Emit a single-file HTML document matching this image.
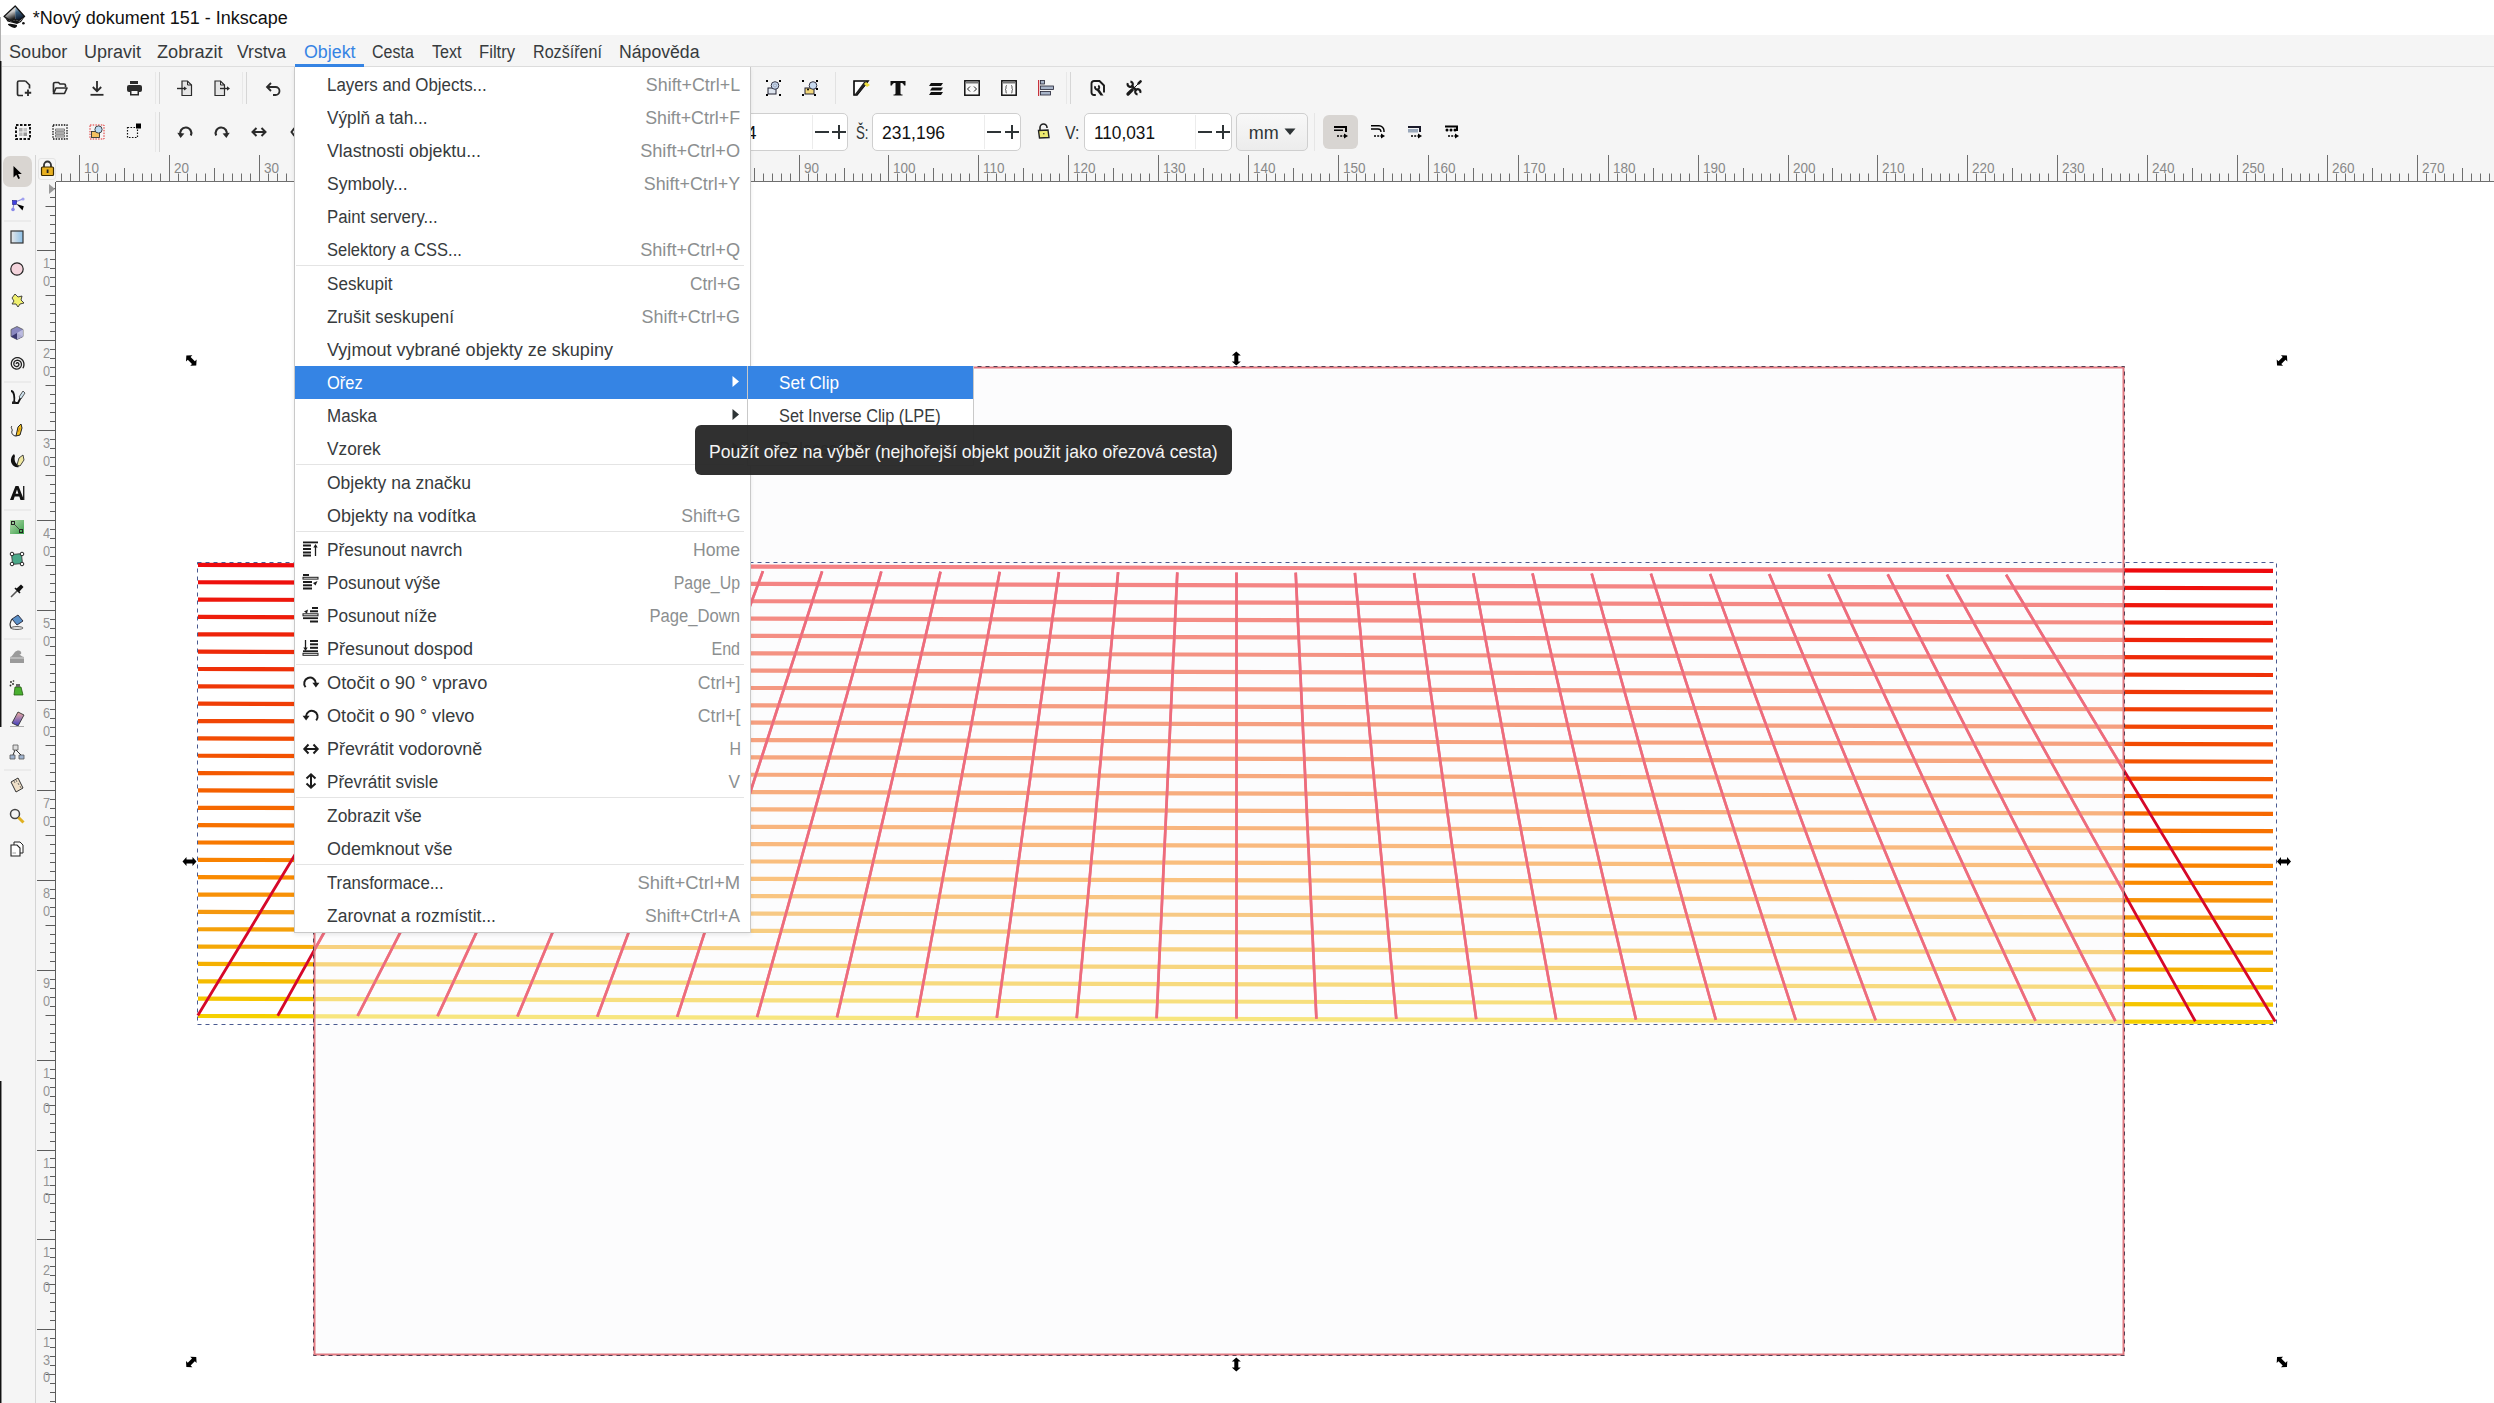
<!DOCTYPE html>
<html><head><meta charset="utf-8"><title>Inkscape</title>
<style>
html,body{margin:0;padding:0;}
body{width:2494px;height:1403px;position:relative;overflow:hidden;background:#fff;font-family:"Liberation Sans", sans-serif;}
.a{position:absolute;}
.t{position:absolute;white-space:pre;line-height:normal;}
svg{position:absolute;overflow:visible;}
</style></head><body>
<div class="a" style="left:0px;top:0px;width:2494px;height:35px;background:#ffffff;"></div>
<svg style="left:0px;top:0px;" width="32" height="34">
<defs><linearGradient id="lgl" x1="0" y1="0" x2="0.3" y2="1"><stop offset="0" stop-color="#ffffff"/><stop offset="0.55" stop-color="#c8c8c8"/><stop offset="1" stop-color="#222"/></linearGradient>
<linearGradient id="lgr" x1="0" y1="0" x2="0.2" y2="1"><stop offset="0" stop-color="#d8ecf8"/><stop offset="0.45" stop-color="#3a6080"/><stop offset="1" stop-color="#0a1428"/></linearGradient></defs>
<path d="M15.2 6 L15.2 19.5 L11 21 L4 16.5 Z" fill="url(#lgl)"/>
<path d="M15.2 6 L24.6 16.5 L19 20.5 L15.2 19.5 Z" fill="url(#lgr)"/>
<path d="M15.2 6 L24.6 16.5 L19 20.5 L15.2 19.5 L11 21 L4 16.5 Z" fill="none" stroke="#111" stroke-width="1.2" stroke-linejoin="round"/>
<path d="M4.5 16.8 L10.5 21.5 L15.5 20 L19.5 21.5 L24.2 17.5 L21 22 L17 24 L12.5 22.8 L7.5 21.5 Z" fill="#141414"/>
<path d="M8 24 C11 23.2 14 24 17 25 C17.5 27 15.5 28.2 13.5 27.8 C11.5 27.3 9.5 26.2 8 24.8 Z" fill="#141414"/>
<circle cx="23.4" cy="23.2" r="1.3" fill="#141414"/>
</svg>
<div class="t" style="left:32.70px;top:7.71px;font-size:18px;color:#111;">*Nový dokument 151 - Inkscape</div>
<div class="a" style="left:0px;top:35px;width:2494px;height:31px;background:#f5f5f5;"></div>
<div class="a" style="left:0px;top:66px;width:2494px;height:1px;background:#dedede;"></div>
<div class="t" style="left:9.40px;top:42.31px;font-size:18px;color:#373b3d;transform:scaleX(1.0058);transform-origin:0 0;">Soubor</div>
<div class="t" style="left:84.40px;top:42.31px;font-size:18px;color:#373b3d;transform:scaleX(1.0012);transform-origin:0 0;">Upravit</div>
<div class="t" style="left:156.60px;top:42.31px;font-size:18px;color:#373b3d;transform:scaleX(1.0100);transform-origin:0 0;">Zobrazit</div>
<div class="t" style="left:237.40px;top:42.31px;font-size:18px;color:#373b3d;transform:scaleX(0.9753);transform-origin:0 0;">Vrstva</div>
<div class="t" style="left:303.80px;top:42.31px;font-size:18px;color:#3584e4;transform:scaleX(0.9898);transform-origin:0 0;">Objekt</div>
<div class="t" style="left:372.40px;top:42.31px;font-size:18px;color:#373b3d;transform:scaleX(0.8888);transform-origin:0 0;">Cesta</div>
<div class="t" style="left:432.30px;top:42.31px;font-size:18px;color:#373b3d;transform:scaleX(0.8965);transform-origin:0 0;">Text</div>
<div class="t" style="left:479.20px;top:42.31px;font-size:18px;color:#373b3d;transform:scaleX(0.9256);transform-origin:0 0;">Filtry</div>
<div class="t" style="left:533.00px;top:42.31px;font-size:18px;color:#373b3d;transform:scaleX(0.8943);transform-origin:0 0;">Rozšíření</div>
<div class="t" style="left:618.80px;top:42.31px;font-size:18px;color:#373b3d;transform:scaleX(0.9806);transform-origin:0 0;">Nápověda</div>
<div class="a" style="left:295px;top:64px;width:69px;height:3px;background:#3584e4;"></div>
<div class="a" style="left:0px;top:67px;width:2494px;height:88px;background:#f5f5f5;"></div>
<svg style="left:16px;top:80px" width="16" height="16" viewBox="0 0 16 16"><path d="M9.5 1 H3 a1.5 1.5 0 0 0 -1.5 1.5 V14 a1.5 1.5 0 0 0 1.5 1.5 H7" fill="none" stroke="#2b2b2b" stroke-width="1.7"/><path d="M9.5 1 L13.5 5 V8.5" fill="none" stroke="#2b2b2b" stroke-width="1.7"/><path d="M12 9.5 V16 M8.8 12.75 H15.2" stroke="#2b2b2b" stroke-width="1.8"/></svg>
<svg style="left:52px;top:80px" width="16" height="16" viewBox="0 0 16 16"><path d="M1.5 12.5 V4 a1.5 1.5 0 0 1 1.5 -1.5 H6.5 L8 4 H12 a1.5 1.5 0 0 1 1.5 1.5 V7" fill="none" stroke="#2b2b2b" stroke-width="1.7"/><path d="M1.5 13.5 L4 8 H15 L12.5 13.5 Z" fill="none" stroke="#2b2b2b" stroke-width="1.7" stroke-linejoin="round"/></svg>
<svg style="left:89px;top:80px" width="16" height="16" viewBox="0 0 16 16"><path d="M8 1 V11 M3.8 7 L8 11.2 L12.2 7" fill="none" stroke="#2b2b2b" stroke-width="1.8"/><path d="M1.5 14.8 H14.5" stroke="#2b2b2b" stroke-width="1.8"/></svg>
<svg style="left:126px;top:80px" width="16" height="16" viewBox="0 0 16 16"><rect x="4" y="1" width="8" height="3" fill="#2b2b2b"/><rect x="1" y="5" width="15" height="7" rx="2" fill="#2b2b2b"/><rect x="4" y="10" width="9" height="5.5" fill="#2b2b2b"/><rect x="5.5" y="11" width="6" height="3" fill="#f5f5f5"/></svg>
<svg style="left:177px;top:80px" width="16" height="16" viewBox="0 0 16 16"><path d="M5 1 H10.5 L14.5 5 V15.5 H5 Z" fill="#e6e6e6" stroke="#2b2b2b" stroke-width="1.2"/><path d="M10.5 1 V5 H14.5" fill="none" stroke="#2b2b2b" stroke-width="1"/><path d="M0 8.5 H8.5" stroke="#2b2b2b" stroke-width="1.4"/><path d="M7 6.5 L10 8.5 L7 10.5 Z" fill="#2b2b2b"/></svg>
<svg style="left:214px;top:80px" width="16" height="16" viewBox="0 0 16 16"><path d="M1 1 H6.5 L10.5 5 V15.5 H1 Z" fill="#e6e6e6" stroke="#2b2b2b" stroke-width="1.2"/><path d="M6.5 1 V5 H10.5" fill="none" stroke="#2b2b2b" stroke-width="1"/><path d="M6 8.5 H14" stroke="#2b2b2b" stroke-width="1.4"/><path d="M13 6.2 L16 8.5 L13 10.8 Z" fill="#2b2b2b"/></svg>
<svg style="left:265px;top:80px" width="16" height="16" viewBox="0 0 16 16"><path d="M2 7 H10.5 a4 4 0 0 1 0 8 H8" fill="none" stroke="#2b2b2b" stroke-width="1.8"/><path d="M6 3 L2 7 L6 11" fill="none" stroke="#2b2b2b" stroke-width="1.8"/></svg>
<div class="a" style="left:155px;top:72px;width:1px;height:32px;background:#e8e8e8;"></div>
<div class="a" style="left:159px;top:72px;width:1px;height:32px;background:#d6d6d6;"></div>
<div class="a" style="left:242px;top:72px;width:1px;height:32px;background:#e8e8e8;"></div>
<div class="a" style="left:246px;top:72px;width:1px;height:32px;background:#d6d6d6;"></div>
<div class="a" style="left:155px;top:112px;width:1px;height:40px;background:#e8e8e8;"></div>
<div class="a" style="left:159px;top:112px;width:1px;height:40px;background:#d6d6d6;"></div>
<svg style="left:15px;top:124px" width="16" height="16" viewBox="0 0 16 16"><rect x="1" y="1" width="14" height="14" fill="none" stroke="#111" stroke-width="2" stroke-dasharray="2.5 1.5"/><rect x="4" y="4" width="3.5" height="3.5" fill="#aaa"/><rect x="8.5" y="4" width="3.5" height="3.5" fill="#c4c4c4"/><rect x="4" y="8.5" width="3.5" height="3.5" fill="#bbb"/><rect x="8.5" y="8.5" width="3.5" height="3.5" fill="#999"/></svg>
<svg style="left:52px;top:124px" width="16" height="16" viewBox="0 0 16 16"><rect x="1" y="1" width="14" height="14" fill="none" stroke="#111" stroke-width="1.3" stroke-dasharray="1.5 1.2"/><path d="M3.5 5 H12.5 V7 H3.5 Z M3.5 8 H12.5 V10 H3.5 Z M3.5 11 H12.5 V13 H3.5 Z" fill="#ddd" stroke="#666" stroke-width="0.8"/></svg>
<svg style="left:89px;top:124px" width="16" height="16" viewBox="0 0 16 16"><rect x="1" y="1" width="14" height="14" fill="none" stroke="#e03030" stroke-width="1" stroke-dasharray="1.5 1.2"/><rect x="2.5" y="7.5" width="8" height="6" fill="#f3c060" stroke="#333" stroke-width="0.9"/><circle cx="9.5" cy="5.5" r="3.6" fill="#bcdcf4" stroke="#333" stroke-width="0.9"/></svg>
<svg style="left:126px;top:123px" width="16" height="16" viewBox="0 0 16 16"><rect x="1.5" y="4.5" width="10" height="10" fill="none" stroke="#111" stroke-width="1.2" stroke-dasharray="1.6 1.4"/><rect x="10" y="0.5" width="5" height="5" fill="#000"/></svg>
<svg style="left:177px;top:124px" width="16" height="16" viewBox="0 0 16 16"><path d="M3.6 11.2 A5.6 5.6 0 1 1 13.8 11.6" fill="none" stroke="#2b2b2b" stroke-width="2.2"/><path d="M0.3 8.8 L3.6 14 L7.4 9.6 Z" fill="#2b2b2b"/></svg>
<svg style="left:214px;top:124px" width="16" height="16" viewBox="0 0 16 16"><path d="M12.4 11.2 A5.6 5.6 0 1 0 2.2 11.6" fill="none" stroke="#2b2b2b" stroke-width="2.2"/><path d="M15.7 8.8 L12.4 14 L8.6 9.6 Z" fill="#2b2b2b"/></svg>
<svg style="left:251px;top:124px" width="16" height="16" viewBox="0 0 16 16"><path d="M2 8 H14" stroke="#2b2b2b" stroke-width="2"/><path d="M5.5 4 L1.5 8 L5.5 12 M10.5 4 L14.5 8 L10.5 12" fill="none" stroke="#2b2b2b" stroke-width="2"/></svg>
<svg style="left:290px;top:124px" width="16" height="16" viewBox="0 0 16 16"><path d="M4.5 4 L1.5 8 L4.5 12" fill="none" stroke="#2b2b2b" stroke-width="2"/></svg>
<svg style="left:765px;top:80px" width="16" height="16" viewBox="0 0 16 16"><rect x="3" y="8" width="8" height="6" fill="#dde4ee" stroke="#223" stroke-width="1"/><circle cx="10" cy="5.5" r="3.8" fill="#c8daf0" stroke="#334" stroke-width="1"/><circle cx="10" cy="5.5" r="1.6" fill="none" stroke="#889" stroke-width="0.6"/><rect x="1" y="0" width="2" height="2" fill="#000"/><rect x="14" y="0" width="2" height="2" fill="#000"/><rect x="1" y="14" width="2" height="2" fill="#000"/><rect x="14" y="14" width="2" height="2" fill="#000"/></svg>
<svg style="left:802px;top:80px" width="16" height="16" viewBox="0 0 16 16"><rect x="3" y="8" width="9" height="6" fill="#f2d77a" stroke="#223" stroke-width="1"/><circle cx="11" cy="5.5" r="3.8" fill="#c8daf0" stroke="#334" stroke-width="1"/><circle cx="6" cy="9.5" r="1" fill="#000"/><rect x="0" y="0" width="2" height="2" fill="#000"/><rect x="14" y="0" width="2" height="2" fill="#000"/><rect x="0" y="14" width="2" height="2" fill="#000"/><rect x="12" y="14" width="2" height="2" fill="#000"/><rect x="14" y="8" width="2" height="2" fill="#000"/></svg>
<div class="a" style="left:835px;top:72px;width:1px;height:32px;background:#e2e2e2;"></div>
<svg style="left:853px;top:80px" width="18" height="16" viewBox="0 0 18 16"><path d="M1 1 H15 L4 15 H1 Z" fill="#fff" stroke="#000" stroke-width="1.6"/><path d="M15 1 L11 2 L2 14 L1 15 L4 15 L13 5 Z" fill="#222"/><path d="M13 2 L17 5 L14 7 L11 4 Z" fill="#f0e040"/></svg>
<svg style="left:890px;top:80px" width="16" height="16" viewBox="0 0 16 16"><path d="M0.5 1 H15.5 V5.5 H14 C13.5 3.5 12.5 3 10.5 3 V13.5 C10.5 14 11 14.5 12.5 14.5 V15.5 H3.5 V14.5 C5 14.5 5.5 14 5.5 13.5 V3 C3.5 3 2.5 3.5 2 5.5 H0.5 Z" fill="#111"/></svg>
<svg style="left:928px;top:80px" width="16" height="16" viewBox="0 0 16 16"><path d="M3 3 L15 3 L13 6 L1 6 Z M4 7.5 L15 7.5 L13 10.5 L2 10.5 Z M3 12 L15 12 L13 15 L1 15 Z" fill="#111"/></svg>
<svg style="left:964px;top:80px" width="16" height="16" viewBox="0 0 16 16"><rect x="0.8" y="0.8" width="14.4" height="14.4" fill="#fafafa" stroke="#111" stroke-width="1.5"/><rect x="1.5" y="2" width="13" height="1.5" fill="#777"/><path d="M6 6.5 L3.5 9 L6 11.5 M10 6.5 L12.5 9 L10 11.5" fill="none" stroke="#222" stroke-width="1"/></svg>
<svg style="left:1001px;top:80px" width="16" height="16" viewBox="0 0 16 16"><rect x="0.8" y="0.8" width="14.4" height="14.4" fill="#fafafa" stroke="#111" stroke-width="1.5"/><rect x="1.5" y="2" width="13" height="1.5" fill="#777"/><path d="M6 5.5 C4.8 5.5 5 6.5 5 8 C5 9 4.5 9.5 4 9.5 C4.5 9.5 5 10 5 11 C5 12.5 4.8 13 6 13 M10 5.5 C11.2 5.5 11 6.5 11 8 C11 9 11.5 9.5 12 9.5 C11.5 9.5 11 10 11 11 C11 12.5 11.2 13 10 13" fill="none" stroke="#444" stroke-width="0.9"/></svg>
<svg style="left:1038px;top:80px" width="16" height="16" viewBox="0 0 16 16"><rect x="0" y="0" width="1.2" height="16" fill="#c8323c"/><rect x="2.5" y="0.5" width="4" height="3.5" fill="#a8b4c8" stroke="#223" stroke-width="0.8"/><rect x="2.5" y="6" width="13" height="3.5" fill="#a8b4c8" stroke="#223" stroke-width="0.8"/><rect x="2.5" y="11.5" width="10" height="3.5" fill="#a8b4c8" stroke="#223" stroke-width="0.8"/></svg>
<div class="a" style="left:1066px;top:72px;width:1px;height:32px;background:#e8e8e8;"></div>
<div class="a" style="left:1070px;top:72px;width:1px;height:32px;background:#d6d6d6;"></div>
<svg style="left:1090px;top:80px" width="16" height="16" viewBox="0 0 16 16"><g stroke="#1a1a1a" fill="none"><path d="M5.8 15 H4 a2.5 2.5 0 0 1 -2.5 -2.5 V3.5 a2.5 2.5 0 0 1 2.5 -2.5 H9.5 L14 5.5 V12.5" stroke-width="1.9"/><path d="M8.2 5.6 A2.1 2.1 0 1 1 5.4 6.2" stroke-width="1.9"/></g><path d="M6.5 10 L9 9 L13.5 15.5 L10.5 15.5 Z" fill="#1a1a1a"/></svg>
<svg style="left:1126px;top:80px" width="16" height="16" viewBox="0 0 16 16"><g stroke="#1a1a1a" fill="none"><path d="M4.43 1.61 A2.6 2.6 0 1 1 1.84 3.10" stroke-width="2.2"/><path d="M11.57 14.39 A2.6 2.6 0 1 1 14.16 12.90" stroke-width="2.2"/><path d="M5.6 5.6 L10.4 10.4" stroke-width="2.3"/><path d="M13.5 2.5 L7 9" stroke-width="1"/><path d="M14.6 1.4 L12.6 3.4" stroke-width="2.6" stroke-linecap="round"/><path d="M2 14 L6.2 9.8" stroke-width="3.3" stroke-linecap="round"/></g></svg>
<div class="a" style="left:560px;top:113px;width:286px;height:36px;background:#fff;border:1px solid #cfcfcf;border-radius:5px;"></div>
<div class="a" style="left:812px;top:115px;width:1px;height:34px;background:#ececec;"></div>
<div class="t" style="left:746.50px;top:123.31px;font-size:18px;color:#111;">4</div>
<div class="a" style="left:815px;top:131px;width:14px;height:2px;background:#2e3436;"></div>
<div class="a" style="left:832px;top:131px;width:14px;height:2px;background:#2e3436;"></div>
<div class="a" style="left:838px;top:125px;width:2px;height:14px;background:#2e3436;"></div>
<div class="t" style="left:855.70px;top:123.31px;font-size:18px;color:#2e3436;transform:scaleX(0.7353);transform-origin:0 0;">Š:</div>
<div class="a" style="left:872px;top:113px;width:147px;height:36px;background:#fff;border:1px solid #cfcfcf;border-radius:5px;"></div>
<div class="a" style="left:984px;top:115px;width:1px;height:34px;background:#ececec;"></div>
<div class="t" style="left:882.30px;top:123.31px;font-size:18px;color:#111;transform:scaleX(0.9694);transform-origin:0 0;">231,196</div>
<div class="a" style="left:987px;top:131px;width:14px;height:2px;background:#2e3436;"></div>
<div class="a" style="left:1005px;top:131px;width:14px;height:2px;background:#2e3436;"></div>
<div class="a" style="left:1011px;top:125px;width:2px;height:14px;background:#2e3436;"></div>
<svg style="left:1036px;top:123px" width="16" height="16" viewBox="0 0 16 16"><path d="M4 7 V4.5 a3.5 3.5 0 0 1 7 0 V5" fill="none" stroke="#222" stroke-width="1.6"/><path d="M2.5 7.5 L12 7 L13 14.5 L3.5 15 Z" fill="#eeea70" stroke="#222" stroke-width="1.4"/><path d="M7 10 L8.5 10 L8 12 Z" fill="#222"/></svg>
<div class="t" style="left:1064.60px;top:123.31px;font-size:18px;color:#2e3436;transform:scaleX(0.8819);transform-origin:0 0;">V:</div>
<div class="a" style="left:1084px;top:113px;width:146px;height:36px;background:#fff;border:1px solid #cfcfcf;border-radius:5px;"></div>
<div class="a" style="left:1195px;top:115px;width:1px;height:34px;background:#ececec;"></div>
<div class="t" style="left:1094.30px;top:123.31px;font-size:18px;color:#111;transform:scaleX(0.9566);transform-origin:0 0;">110,031</div>
<div class="a" style="left:1198px;top:131px;width:14px;height:2px;background:#2e3436;"></div>
<div class="a" style="left:1216px;top:131px;width:14px;height:2px;background:#2e3436;"></div>
<div class="a" style="left:1222px;top:125px;width:2px;height:14px;background:#2e3436;"></div>
<div class="a" style="left:1236px;top:113px;width:70px;height:36px;background:linear-gradient(#f8f8f8,#ececec);border:1px solid #cfcfcf;border-radius:5px;"></div>
<div class="t" style="left:1248.80px;top:123.31px;font-size:18px;color:#2e3436;">mm</div>
<svg style="left:1284px;top:128px" width="12" height="8" viewBox="0 0 12 8"><path d="M0.5 0.5 H11.5 L6 7 Z" fill="#2e3436"/></svg>
<div class="a" style="left:1314px;top:113px;width:1px;height:38px;background:#e6e6e6;"></div>
<div class="a" style="left:1323px;top:115px;width:35px;height:34px;background:#d8d5d2;border-radius:6px;"></div>
<svg style="left:1333px;top:124px" width="16" height="16" viewBox="0 0 16 16"><path d="M1 2 H14 V8 H12 V4 H1 Z" fill="#000"/><path d="M1 5.5 H10 V7 H1 Z" fill="#000"/><path d="M4 12 H11" stroke="#000" stroke-width="1.6" stroke-dasharray="2 1.2"/><path d="M11 9.5 L15 12 L11 14.5 Z" fill="#000"/></svg>
<svg style="left:1370px;top:124px" width="16" height="16" viewBox="0 0 16 16"><path d="M1 1.8 H9 a5 5 0 0 1 5 5 V8" fill="none" stroke="#000" stroke-width="1.4"/><path d="M1 5 H8 a3 3 0 0 1 3 3" fill="none" stroke="#000" stroke-width="1.3"/><path d="M4 12 H11" stroke="#000" stroke-width="1.6" stroke-dasharray="2 1.2"/><path d="M11 9.5 L15 12 L11 14.5 Z" fill="#000"/></svg>
<svg style="left:1407px;top:124px" width="16" height="16" viewBox="0 0 16 16"><path d="M1 2 H14 V8 H12 V4 H1 Z" fill="#1a1a2a"/><rect x="1" y="5" width="10" height="3.5" fill="#9aa8ba"/><path d="M4 12 H11" stroke="#000" stroke-width="1.6" stroke-dasharray="2 1.2"/><path d="M11 9.5 L15 12 L11 14.5 Z" fill="#000"/></svg>
<svg style="left:1444px;top:124px" width="16" height="16" viewBox="0 0 16 16"><path d="M1 1.5 H14 V7 H12 V3.5 H1 Z" fill="#000"/><circle cx="3" cy="6" r="1.5" fill="#000"/><circle cx="7" cy="6" r="1.5" fill="#000"/><circle cx="11" cy="6" r="1.5" fill="#000"/><path d="M4 12 H11" stroke="#000" stroke-width="1.6" stroke-dasharray="2 1.2"/><path d="M11 9.5 L15 12 L11 14.5 Z" fill="#000"/></svg>
<div class="a" style="left:0px;top:155px;width:2494px;height:27px;background:#f5f5f5;"></div>
<svg style="left:0px;top:0px;" width="2494" height="200"><path d="M61.5 173.5V181M70.5 173.5V181M79.5 155V181M88.5 173.5V181M97.5 173.5V181M106.5 173.5V181M115.5 173.5V181M124.5 168V181M133.5 173.5V181M142.5 173.5V181M151.5 173.5V181M160.5 173.5V181M169.5 155V181M178.5 173.5V181M187.5 173.5V181M196.5 173.5V181M205.5 173.5V181M214.5 168V181M223.5 173.5V181M232.5 173.5V181M241.5 173.5V181M250.5 173.5V181M259.5 155V181M268.5 173.5V181M277.5 173.5V181M286.5 173.5V181M295.5 173.5V181M304.5 168V181M313.5 173.5V181M322.5 173.5V181M331.5 173.5V181M340.5 173.5V181M349.5 155V181M358.5 173.5V181M367.5 173.5V181M376.5 173.5V181M385.5 173.5V181M394.5 168V181M403.5 173.5V181M412.5 173.5V181M421.5 173.5V181M430.5 173.5V181M439.5 155V181M448.5 173.5V181M457.5 173.5V181M466.5 173.5V181M475.5 173.5V181M484.5 168V181M493.5 173.5V181M502.5 173.5V181M511.5 173.5V181M520.5 173.5V181M529.5 155V181M538.5 173.5V181M547.5 173.5V181M556.5 173.5V181M565.5 173.5V181M574.5 168V181M583.5 173.5V181M592.5 173.5V181M601.5 173.5V181M610.5 173.5V181M619.5 155V181M628.5 173.5V181M637.5 173.5V181M646.5 173.5V181M655.5 173.5V181M664.5 168V181M673.5 173.5V181M682.5 173.5V181M691.5 173.5V181M700.5 173.5V181M709.5 155V181M718.5 173.5V181M727.5 173.5V181M736.5 173.5V181M745.5 173.5V181M754.5 168V181M763.5 173.5V181M772.5 173.5V181M781.5 173.5V181M790.5 173.5V181M799.5 155V181M808.5 173.5V181M817.5 173.5V181M826.5 173.5V181M835.5 173.5V181M844.5 168V181M853.5 173.5V181M862.5 173.5V181M871.5 173.5V181M880.5 173.5V181M888.5 155V181M897.5 173.5V181M906.5 173.5V181M915.5 173.5V181M924.5 173.5V181M933.5 168V181M942.5 173.5V181M951.5 173.5V181M960.5 173.5V181M969.5 173.5V181M978.5 155V181M987.5 173.5V181M996.5 173.5V181M1005.5 173.5V181M1014.5 173.5V181M1023.5 168V181M1032.5 173.5V181M1041.5 173.5V181M1050.5 173.5V181M1059.5 173.5V181M1068.5 155V181M1077.5 173.5V181M1086.5 173.5V181M1095.5 173.5V181M1104.5 173.5V181M1113.5 168V181M1122.5 173.5V181M1131.5 173.5V181M1140.5 173.5V181M1149.5 173.5V181M1158.5 155V181M1167.5 173.5V181M1176.5 173.5V181M1185.5 173.5V181M1194.5 173.5V181M1203.5 168V181M1212.5 173.5V181M1221.5 173.5V181M1230.5 173.5V181M1239.5 173.5V181M1248.5 155V181M1257.5 173.5V181M1266.5 173.5V181M1275.5 173.5V181M1284.5 173.5V181M1293.5 168V181M1302.5 173.5V181M1311.5 173.5V181M1320.5 173.5V181M1329.5 173.5V181M1338.5 155V181M1347.5 173.5V181M1356.5 173.5V181M1365.5 173.5V181M1374.5 173.5V181M1383.5 168V181M1392.5 173.5V181M1401.5 173.5V181M1410.5 173.5V181M1419.5 173.5V181M1428.5 155V181M1437.5 173.5V181M1446.5 173.5V181M1455.5 173.5V181M1464.5 173.5V181M1473.5 168V181M1482.5 173.5V181M1491.5 173.5V181M1500.5 173.5V181M1509.5 173.5V181M1518.5 155V181M1527.5 173.5V181M1536.5 173.5V181M1545.5 173.5V181M1554.5 173.5V181M1563.5 168V181M1572.5 173.5V181M1581.5 173.5V181M1590.5 173.5V181M1599.5 173.5V181M1608.5 155V181M1617.5 173.5V181M1626.5 173.5V181M1635.5 173.5V181M1644.5 173.5V181M1653.5 168V181M1662.5 173.5V181M1671.5 173.5V181M1680.5 173.5V181M1689.5 173.5V181M1698.5 155V181M1707.5 173.5V181M1716.5 173.5V181M1725.5 173.5V181M1734.5 173.5V181M1743.5 168V181M1752.5 173.5V181M1761.5 173.5V181M1770.5 173.5V181M1779.5 173.5V181M1788.5 155V181M1796.5 173.5V181M1805.5 173.5V181M1814.5 173.5V181M1823.5 173.5V181M1832.5 168V181M1841.5 173.5V181M1850.5 173.5V181M1859.5 173.5V181M1868.5 173.5V181M1877.5 155V181M1886.5 173.5V181M1895.5 173.5V181M1904.5 173.5V181M1913.5 173.5V181M1922.5 168V181M1931.5 173.5V181M1940.5 173.5V181M1949.5 173.5V181M1958.5 173.5V181M1967.5 155V181M1976.5 173.5V181M1985.5 173.5V181M1994.5 173.5V181M2003.5 173.5V181M2012.5 168V181M2021.5 173.5V181M2030.5 173.5V181M2039.5 173.5V181M2048.5 173.5V181M2057.5 155V181M2066.5 173.5V181M2075.5 173.5V181M2084.5 173.5V181M2093.5 173.5V181M2102.5 168V181M2111.5 173.5V181M2120.5 173.5V181M2129.5 173.5V181M2138.5 173.5V181M2147.5 155V181M2156.5 173.5V181M2165.5 173.5V181M2174.5 173.5V181M2183.5 173.5V181M2192.5 168V181M2201.5 173.5V181M2210.5 173.5V181M2219.5 173.5V181M2228.5 173.5V181M2237.5 155V181M2246.5 173.5V181M2255.5 173.5V181M2264.5 173.5V181M2273.5 173.5V181M2282.5 168V181M2291.5 173.5V181M2300.5 173.5V181M2309.5 173.5V181M2318.5 173.5V181M2327.5 155V181M2336.5 173.5V181M2345.5 173.5V181M2354.5 173.5V181M2363.5 173.5V181M2372.5 168V181M2381.5 173.5V181M2390.5 173.5V181M2399.5 173.5V181M2408.5 173.5V181M2417.5 155V181M2426.5 173.5V181M2435.5 173.5V181M2444.5 173.5V181M2453.5 173.5V181M2462.5 168V181M2471.5 173.5V181M2480.5 173.5V181M2489.5 173.5V181" stroke="#6e6e6e" stroke-width="1" fill="none"/><path d="M56 181.5H2494" stroke="#6e6e6e" stroke-width="1"/></svg>
<div class="t" style="left:84.00px;top:159.23px;font-size:15px;color:#888888;transform:scaleX(0.9000);transform-origin:0 0;">10</div>
<div class="t" style="left:174.00px;top:159.23px;font-size:15px;color:#888888;transform:scaleX(0.9000);transform-origin:0 0;">20</div>
<div class="t" style="left:264.00px;top:159.23px;font-size:15px;color:#888888;transform:scaleX(0.9000);transform-origin:0 0;">30</div>
<div class="t" style="left:354.00px;top:159.23px;font-size:15px;color:#888888;transform:scaleX(0.9000);transform-origin:0 0;">40</div>
<div class="t" style="left:444.00px;top:159.23px;font-size:15px;color:#888888;transform:scaleX(0.9000);transform-origin:0 0;">50</div>
<div class="t" style="left:534.00px;top:159.23px;font-size:15px;color:#888888;transform:scaleX(0.9000);transform-origin:0 0;">60</div>
<div class="t" style="left:624.00px;top:159.23px;font-size:15px;color:#888888;transform:scaleX(0.9000);transform-origin:0 0;">70</div>
<div class="t" style="left:714.00px;top:159.23px;font-size:15px;color:#888888;transform:scaleX(0.9000);transform-origin:0 0;">80</div>
<div class="t" style="left:804.00px;top:159.23px;font-size:15px;color:#888888;transform:scaleX(0.9000);transform-origin:0 0;">90</div>
<div class="t" style="left:893.00px;top:159.23px;font-size:15px;color:#888888;transform:scaleX(0.9000);transform-origin:0 0;">100</div>
<div class="t" style="left:983.00px;top:159.23px;font-size:15px;color:#888888;transform:scaleX(0.9000);transform-origin:0 0;">110</div>
<div class="t" style="left:1073.00px;top:159.23px;font-size:15px;color:#888888;transform:scaleX(0.9000);transform-origin:0 0;">120</div>
<div class="t" style="left:1163.00px;top:159.23px;font-size:15px;color:#888888;transform:scaleX(0.9000);transform-origin:0 0;">130</div>
<div class="t" style="left:1253.00px;top:159.23px;font-size:15px;color:#888888;transform:scaleX(0.9000);transform-origin:0 0;">140</div>
<div class="t" style="left:1343.00px;top:159.23px;font-size:15px;color:#888888;transform:scaleX(0.9000);transform-origin:0 0;">150</div>
<div class="t" style="left:1433.00px;top:159.23px;font-size:15px;color:#888888;transform:scaleX(0.9000);transform-origin:0 0;">160</div>
<div class="t" style="left:1523.00px;top:159.23px;font-size:15px;color:#888888;transform:scaleX(0.9000);transform-origin:0 0;">170</div>
<div class="t" style="left:1613.00px;top:159.23px;font-size:15px;color:#888888;transform:scaleX(0.9000);transform-origin:0 0;">180</div>
<div class="t" style="left:1703.00px;top:159.23px;font-size:15px;color:#888888;transform:scaleX(0.9000);transform-origin:0 0;">190</div>
<div class="t" style="left:1793.00px;top:159.23px;font-size:15px;color:#888888;transform:scaleX(0.9000);transform-origin:0 0;">200</div>
<div class="t" style="left:1882.00px;top:159.23px;font-size:15px;color:#888888;transform:scaleX(0.9000);transform-origin:0 0;">210</div>
<div class="t" style="left:1972.00px;top:159.23px;font-size:15px;color:#888888;transform:scaleX(0.9000);transform-origin:0 0;">220</div>
<div class="t" style="left:2062.00px;top:159.23px;font-size:15px;color:#888888;transform:scaleX(0.9000);transform-origin:0 0;">230</div>
<div class="t" style="left:2152.00px;top:159.23px;font-size:15px;color:#888888;transform:scaleX(0.9000);transform-origin:0 0;">240</div>
<div class="t" style="left:2242.00px;top:159.23px;font-size:15px;color:#888888;transform:scaleX(0.9000);transform-origin:0 0;">250</div>
<div class="t" style="left:2332.00px;top:159.23px;font-size:15px;color:#888888;transform:scaleX(0.9000);transform-origin:0 0;">260</div>
<div class="t" style="left:2422.00px;top:159.23px;font-size:15px;color:#888888;transform:scaleX(0.9000);transform-origin:0 0;">270</div>
<div class="a" style="left:0px;top:182px;width:56px;height:1221px;background:#f5f5f5;"></div>
<svg style="left:0px;top:0px;" width="60" height="1403"><path d="M50 188.5H55M50 197.5H55M45.5 206.5H55M50 215.5H55M50 224.5H55M50 233.5H55M50 242.5H55M37 250.5H55M50 259.5H55M50 268.5H55M50 277.5H55M50 286.5H55M45.5 295.5H55M50 304.5H55M50 313.5H55M50 322.5H55M50 331.5H55M37 340.5H55M50 349.5H55M50 358.5H55M50 367.5H55M50 376.5H55M45.5 385.5H55M50 394.5H55M50 403.5H55M50 412.5H55M50 421.5H55M37 430.5H55M50 439.5H55M50 448.5H55M50 457.5H55M50 466.5H55M45.5 475.5H55M50 484.5H55M50 493.5H55M50 502.5H55M50 511.5H55M37 520.5H55M50 529.5H55M50 538.5H55M50 547.5H55M50 556.5H55M45.5 565.5H55M50 574.5H55M50 583.5H55M50 592.5H55M50 601.5H55M37 610.5H55M50 619.5H55M50 628.5H55M50 637.5H55M50 646.5H55M45.5 655.5H55M50 664.5H55M50 673.5H55M50 682.5H55M50 691.5H55M37 700.5H55M50 709.5H55M50 718.5H55M50 727.5H55M50 736.5H55M45.5 745.5H55M50 754.5H55M50 763.5H55M50 772.5H55M50 781.5H55M37 790.5H55M50 799.5H55M50 808.5H55M50 817.5H55M50 826.5H55M45.5 835.5H55M50 844.5H55M50 853.5H55M50 862.5H55M50 871.5H55M37 880.5H55M50 889.5H55M50 898.5H55M50 907.5H55M50 916.5H55M45.5 925.5H55M50 934.5H55M50 943.5H55M50 952.5H55M50 961.5H55M37 970.5H55M50 979.5H55M50 988.5H55M50 997.5H55M50 1006.5H55M45.5 1015.5H55M50 1024.5H55M50 1033.5H55M50 1042.5H55M50 1051.5H55M37 1060.5H55M50 1069.5H55M50 1078.5H55M50 1087.5H55M50 1096.5H55M45.5 1105.5H55M50 1114.5H55M50 1123.5H55M50 1132.5H55M50 1141.5H55M37 1150.5H55M50 1158.5H55M50 1167.5H55M50 1176.5H55M50 1185.5H55M45.5 1194.5H55M50 1203.5H55M50 1212.5H55M50 1221.5H55M50 1230.5H55M37 1239.5H55M50 1248.5H55M50 1257.5H55M50 1266.5H55M50 1275.5H55M45.5 1284.5H55M50 1293.5H55M50 1302.5H55M50 1311.5H55M50 1320.5H55M37 1329.5H55M50 1338.5H55M50 1347.5H55M50 1356.5H55M50 1365.5H55M45.5 1374.5H55M50 1383.5H55M50 1392.5H55M50 1401.5H55" stroke="#5c5c5c" stroke-width="1" fill="none"/><path d="M55.5 182V1403" stroke="#5c5c5c" stroke-width="1"/><path d="M35.5 155V1403" stroke="#d4d4d4" stroke-width="1"/></svg>
<div class="t" style="left:43.00px;top:254.43px;font-size:15px;color:#949494;transform:scaleX(0.8500);transform-origin:0 0;">1</div>
<div class="t" style="left:43.00px;top:271.93px;font-size:15px;color:#949494;transform:scaleX(0.8500);transform-origin:0 0;">0</div>
<div class="t" style="left:43.00px;top:344.43px;font-size:15px;color:#949494;transform:scaleX(0.8500);transform-origin:0 0;">2</div>
<div class="t" style="left:43.00px;top:361.93px;font-size:15px;color:#949494;transform:scaleX(0.8500);transform-origin:0 0;">0</div>
<div class="t" style="left:43.00px;top:434.43px;font-size:15px;color:#949494;transform:scaleX(0.8500);transform-origin:0 0;">3</div>
<div class="t" style="left:43.00px;top:451.93px;font-size:15px;color:#949494;transform:scaleX(0.8500);transform-origin:0 0;">0</div>
<div class="t" style="left:43.00px;top:524.42px;font-size:15px;color:#949494;transform:scaleX(0.8500);transform-origin:0 0;">4</div>
<div class="t" style="left:43.00px;top:541.92px;font-size:15px;color:#949494;transform:scaleX(0.8500);transform-origin:0 0;">0</div>
<div class="t" style="left:43.00px;top:614.42px;font-size:15px;color:#949494;transform:scaleX(0.8500);transform-origin:0 0;">5</div>
<div class="t" style="left:43.00px;top:631.92px;font-size:15px;color:#949494;transform:scaleX(0.8500);transform-origin:0 0;">0</div>
<div class="t" style="left:43.00px;top:704.42px;font-size:15px;color:#949494;transform:scaleX(0.8500);transform-origin:0 0;">6</div>
<div class="t" style="left:43.00px;top:721.92px;font-size:15px;color:#949494;transform:scaleX(0.8500);transform-origin:0 0;">0</div>
<div class="t" style="left:43.00px;top:794.42px;font-size:15px;color:#949494;transform:scaleX(0.8500);transform-origin:0 0;">7</div>
<div class="t" style="left:43.00px;top:811.92px;font-size:15px;color:#949494;transform:scaleX(0.8500);transform-origin:0 0;">0</div>
<div class="t" style="left:43.00px;top:884.42px;font-size:15px;color:#949494;transform:scaleX(0.8500);transform-origin:0 0;">8</div>
<div class="t" style="left:43.00px;top:901.92px;font-size:15px;color:#949494;transform:scaleX(0.8500);transform-origin:0 0;">0</div>
<div class="t" style="left:43.00px;top:974.42px;font-size:15px;color:#949494;transform:scaleX(0.8500);transform-origin:0 0;">9</div>
<div class="t" style="left:43.00px;top:991.92px;font-size:15px;color:#949494;transform:scaleX(0.8500);transform-origin:0 0;">0</div>
<div class="t" style="left:43.00px;top:1064.42px;font-size:15px;color:#949494;transform:scaleX(0.8500);transform-origin:0 0;">1</div>
<div class="t" style="left:43.00px;top:1081.92px;font-size:15px;color:#949494;transform:scaleX(0.8500);transform-origin:0 0;">0</div>
<div class="t" style="left:43.00px;top:1099.42px;font-size:15px;color:#949494;transform:scaleX(0.8500);transform-origin:0 0;">0</div>
<div class="t" style="left:43.00px;top:1154.42px;font-size:15px;color:#949494;transform:scaleX(0.8500);transform-origin:0 0;">1</div>
<div class="t" style="left:43.00px;top:1171.92px;font-size:15px;color:#949494;transform:scaleX(0.8500);transform-origin:0 0;">1</div>
<div class="t" style="left:43.00px;top:1189.42px;font-size:15px;color:#949494;transform:scaleX(0.8500);transform-origin:0 0;">0</div>
<div class="t" style="left:43.00px;top:1243.42px;font-size:15px;color:#949494;transform:scaleX(0.8500);transform-origin:0 0;">1</div>
<div class="t" style="left:43.00px;top:1260.92px;font-size:15px;color:#949494;transform:scaleX(0.8500);transform-origin:0 0;">2</div>
<div class="t" style="left:43.00px;top:1278.42px;font-size:15px;color:#949494;transform:scaleX(0.8500);transform-origin:0 0;">0</div>
<div class="t" style="left:43.00px;top:1333.42px;font-size:15px;color:#949494;transform:scaleX(0.8500);transform-origin:0 0;">1</div>
<div class="t" style="left:43.00px;top:1350.92px;font-size:15px;color:#949494;transform:scaleX(0.8500);transform-origin:0 0;">3</div>
<div class="t" style="left:43.00px;top:1368.42px;font-size:15px;color:#949494;transform:scaleX(0.8500);transform-origin:0 0;">0</div>
<svg style="left:49px;top:184px" width="6" height="10" viewBox="0 0 6 10"><path d="M0 0 L6 5 L0 10 Z" fill="#9a9a9a"/></svg>
<div class="a" style="left:38px;top:158px;width:18px;height:22px;background:#f5f5f5;border-radius:3px;border:1px solid #e4e4e4;box-sizing:border-box;"></div>
<svg style="left:40px;top:160px" width="16" height="16" viewBox="0 0 16 16"><path d="M4 7 V5 a3.5 3.5 0 0 1 7 0 V7" fill="none" stroke="#333" stroke-width="1.8"/><rect x="1.5" y="7" width="12" height="8.5" rx="1" fill="#e8b020" stroke="#3a2a00" stroke-width="1.2"/><rect x="6.7" y="9.5" width="1.8" height="3.5" fill="#222"/></svg>
<div class="a" style="left:0px;top:155px;width:35px;height:1248px;background:#f5f5f5;"></div>
<div class="a" style="left:35px;top:155px;width:1px;height:1248px;background:#d4d4d4;"></div>
<div class="a" style="left:3px;top:156px;width:29px;height:31px;background:#d9d5d1;border-radius:7px;"></div>
<div class="a" style="left:4px;top:220px;width:27px;height:2px;background:#ebebeb;"></div>
<div class="a" style="left:4px;top:381px;width:27px;height:2px;background:#ebebeb;"></div>
<div class="a" style="left:4px;top:509px;width:27px;height:2px;background:#ebebeb;"></div>
<div class="a" style="left:4px;top:638px;width:27px;height:2px;background:#ebebeb;"></div>
<div class="a" style="left:4px;top:769px;width:27px;height:2px;background:#ebebeb;"></div>
<div class="a" style="left:0px;top:61px;width:1px;height:666px;background:#111111;"></div>
<div class="a" style="left:1px;top:61px;width:1px;height:666px;background:#8a8a8a;"></div>
<div class="a" style="left:0px;top:1081px;width:1px;height:322px;background:#111111;"></div>
<div class="a" style="left:1px;top:1081px;width:1px;height:322px;background:#8a8a8a;"></div>
<div class="a" style="left:0px;top:17px;width:1px;height:44px;background:#b0b0b0;"></div>
<svg style="left:9px;top:164px" width="16" height="16" viewBox="0 0 16 16"><path d="M4.5 2 L4.5 13.5 L7.3 10.8 L9.3 15 L11 14.2 L9 10 L12.8 10 Z" fill="#000"/></svg>
<svg style="left:9px;top:196px" width="16" height="16" viewBox="0 0 16 16"><path d="M6 6 L14 3" stroke="#8a8ae0" stroke-width="1.2"/><circle cx="14" cy="3" r="1.6" fill="#a0a0f0"/><path d="M5 7 L4 13" stroke="#8a8ae0" stroke-width="1.2"/><circle cx="4" cy="13.5" r="1.8" fill="#8888e8"/><rect x="3.5" y="4.5" width="4" height="4" fill="#4040e0" stroke="#202080" stroke-width="0.6"/><path d="M7.5 8 L13.5 14.5 L14.8 10.2 Z" fill="#000"/></svg>
<svg style="left:9px;top:229px" width="16" height="16" viewBox="0 0 16 16"><defs><linearGradient id="tg3" x1="0" x2="1"><stop offset="0" stop-color="#e8e8e8"/><stop offset="1" stop-color="#8cc0e8"/></linearGradient></defs><rect x="2" y="2" width="12" height="12" fill="url(#tg3)" stroke="#333" stroke-width="1.2"/></svg>
<svg style="left:9px;top:261px" width="16" height="16" viewBox="0 0 16 16"><circle cx="8" cy="8" r="6.2" fill="#f4d4dc" stroke="#222" stroke-width="1.2"/></svg>
<svg style="left:9px;top:292px" width="16" height="16" viewBox="0 0 16 16"><path d="M3 6 L6 2 L9 5 L13 4 L12 8 L15 11 L11 12 L9 15 L7 12 L3 12 L5 9 Z" fill="#f0f070" stroke="#333" stroke-width="0.9"/></svg>
<svg style="left:9px;top:325px" width="16" height="16" viewBox="0 0 16 16"><path d="M8 1.5 L14 4.5 V11.5 L8 14.5 L2 11.5 V4.5 Z" fill="#8a88c0" stroke="#555" stroke-width="0.8"/><path d="M8 8 L14 11.5 L8 14.5 L2 11.5 Z" fill="#3a3870"/><path d="M8 8 V14.5 L14 11.5 V4.5 Z" fill="#c8c8e8" opacity="0.8"/></svg>
<svg style="left:9px;top:356px" width="16" height="16" viewBox="0 0 16 16"><path d="M7.40 8.00 L7.33 7.86 L7.30 7.70 L7.31 7.51 L7.36 7.32 L7.47 7.14 L7.63 6.97 L7.83 6.83 L8.08 6.74 L8.35 6.71 L8.65 6.73 L8.94 6.82 L9.23 6.99 L9.48 7.22 L9.69 7.51 L9.83 7.86 L9.90 8.24 L9.89 8.65 L9.79 9.06 L9.60 9.46 L9.32 9.82 L8.96 10.13 L8.53 10.36 L8.04 10.50 L7.52 10.53 L6.98 10.46 L6.46 10.27 L5.97 9.97 L5.54 9.56 L5.20 9.06 L4.96 8.48 L4.85 7.85 L4.86 7.19 L5.02 6.54 L5.31 5.91 L5.74 5.35 L6.28 4.87 L6.93 4.51 L7.65 4.28 L8.42 4.21 L9.21 4.29 L9.97 4.54 L10.69 4.95 L11.32 5.51 L11.83 6.20 L12.19 6.99 L12.39 7.86 L12.41 8.77 L12.24 9.68 L11.88 10.55 L11.34 11.34 L10.64 12.02 L9.80 12.55 L8.85 12.90 L7.84 13.05 L6.80 13.00 L5.78 12.72 L4.82 12.24 L3.96 11.56 L3.25 10.71 L2.72 9.72 L2.40 8.62 L2.31 7.46 L2.46 6.30 L2.85 5.17 L3.47 4.13 L4.29 3.22 L5.30 2.50 L6.46 1.99 L7.70 1.71 L9.00 1.70 L10.28 1.96 L11.50 2.48 L12.61 3.24 L13.55 4.23 L14.27 5.40 L14.75 6.71 L14.95 8.11 L14.87 9.53 L14.49 10.93 L13.82 12.23" fill="none" stroke="#222" stroke-width="1.3"/></svg>
<svg style="left:9px;top:389px" width="16" height="16" viewBox="0 0 16 16"><path d="M2 2 C5 2 6 8 5 14 H9 L14 4" fill="none" stroke="#111" stroke-width="1.8"/><path d="M10 8 L14 2 L16 4 L12 10 Z" fill="#cfe4f0" stroke="#333" stroke-width="0.8"/><rect x="3" y="12.5" width="4" height="2.5" fill="#222"/></svg>
<svg style="left:9px;top:422px" width="16" height="16" viewBox="0 0 16 16"><path d="M3 4 C1 6 4 7 3 9 C2 11 4 14 7 14" fill="none" stroke="#222" stroke-width="1"/><path d="M7 14 L9 5 L12 2 L13 6 L11 13 Z" fill="#f4c020" stroke="#222" stroke-width="1"/><path d="M9 10 L11 6" stroke="#c07000" stroke-width="0.8"/></svg>
<svg style="left:9px;top:453px" width="16" height="16" viewBox="0 0 16 16"><path d="M5 1 C2 3 1 8 3 11 C4 13 7 15 10 14 L8 11 C6 10 5 6 6 3 Z" fill="#111"/><path d="M8 12 L10 5 L14 2 L15 7 L11 13 Z" fill="#f0e8a0" stroke="#333" stroke-width="0.9"/></svg>
<svg style="left:9px;top:485px" width="16" height="16" viewBox="0 0 16 16"><path d="M1 15 L6.5 1 H9.5 L15 15 H11.5 L10.3 11.5 H5.7 L4.5 15 Z M6.6 8.8 H9.4 L8 4.6 Z" fill="#111"/><rect x="14" y="1" width="1.4" height="14" fill="#222"/></svg>
<svg style="left:9px;top:519px" width="16" height="16" viewBox="0 0 16 16"><defs><linearGradient id="tg12" x1="0" y1="0" x2="1" y2="1"><stop offset="0" stop-color="#b8dcb0"/><stop offset="1" stop-color="#3aa04a"/></linearGradient></defs><rect x="1" y="1" width="14" height="14" fill="url(#tg12)"/><rect x="2.5" y="2.5" width="3" height="3" fill="none" stroke="#222" stroke-width="1"/><rect x="10.5" y="10.5" width="3" height="3" fill="none" stroke="#222" stroke-width="1"/><path d="M5 5 L11 11" stroke="#333" stroke-width="0.8"/></svg>
<svg style="left:9px;top:551px" width="16" height="16" viewBox="0 0 16 16"><path d="M3 3 C6 4 10 2 13 3 C12 6 14 10 13 13 C10 12 6 14 3 13 C4 10 2 6 3 3 Z" fill="#4aa888" stroke="#333" stroke-width="0.8"/><circle cx="3" cy="3" r="1.8" fill="#fff" stroke="#222" stroke-width="1"/><circle cx="13" cy="3" r="1.8" fill="#fff" stroke="#222" stroke-width="1"/><circle cx="3" cy="13" r="1.8" fill="#fff" stroke="#222" stroke-width="1"/><circle cx="13" cy="13" r="1.8" fill="#fff" stroke="#222" stroke-width="1"/></svg>
<svg style="left:9px;top:583px" width="16" height="16" viewBox="0 0 16 16"><path d="M2 14 L9 7" stroke="#555" stroke-width="1.6"/><path d="M7 6 L12 1.5 L14.5 4 L10 9 Z" fill="#111"/><path d="M6 5 L11 10" stroke="#111" stroke-width="1.6"/></svg>
<svg style="left:9px;top:614px" width="16" height="16" viewBox="0 0 16 16"><path d="M3 5 L9 1 L14 7 L8 11 Z" fill="#5a90c8" stroke="#223" stroke-width="0.9"/><path d="M3 5 C1 8 1 12 2 14 H10" fill="none" stroke="#333" stroke-width="1.2"/><ellipse cx="8" cy="14" rx="6" ry="1.5" fill="#e0e0e0" stroke="#444" stroke-width="0.8"/></svg>
<svg style="left:9px;top:648px" width="16" height="16" viewBox="0 0 16 16"><path d="M1 15 V9 C3 9 4 6 6 4 C8 2 11 2 12 4 C13 6 11 7 10 6 C12 8 14 9 15 9 V15 Z" fill="#9a9a9a"/><path d="M1 10 H15" stroke="#d8d8d8" stroke-width="1"/></svg>
<svg style="left:9px;top:680px" width="16" height="16" viewBox="0 0 16 16"><path d="M6 7 H12 L14 15 H5 Z" fill="#4ab030" stroke="#225a10" stroke-width="0.8"/><rect x="7" y="4" width="4" height="3" fill="#666"/><circle cx="2" cy="2" r="0.9" fill="#222"/><circle cx="4" cy="4" r="0.9" fill="#222"/><circle cx="1.5" cy="5.5" r="0.9" fill="#222"/><circle cx="4.5" cy="1" r="0.8" fill="#222"/></svg>
<svg style="left:9px;top:711px" width="16" height="16" viewBox="0 0 16 16"><defs><linearGradient id="tg18" x1="0" y1="0" x2="0" y2="1"><stop offset="0" stop-color="#f4b0a0"/><stop offset="1" stop-color="#3a3ac0"/></linearGradient></defs><path d="M9 1 L15 4 L9 15 L3 12 Z" fill="url(#tg18)" stroke="#333" stroke-width="0.9"/><path d="M1 15.5 H15" stroke="#aaa" stroke-width="1"/></svg>
<svg style="left:9px;top:744px" width="16" height="16" viewBox="0 0 16 16"><path d="M4 1 H9 V6 H4 Z" fill="#ddd" stroke="#555" stroke-width="0.8"/><path d="M1 11 H6 V15 H1 Z M10 11 H15 V15 H10 Z" fill="#a0b4d0" stroke="#555" stroke-width="0.8"/><path d="M6 6 L4 11 M7 6 L12 11" stroke="#333" stroke-width="1"/></svg>
<svg style="left:9px;top:777px" width="16" height="16" viewBox="0 0 16 16"><path d="M2 5 L9 1 L14 11 L7 15 Z" fill="#f0e0c8" stroke="#333" stroke-width="1"/><path d="M5 4 L6 6 M7 3 L8 5 M9 6 L10 8 M11 9 L12 11" stroke="#555" stroke-width="0.8"/></svg>
<svg style="left:9px;top:808px" width="16" height="16" viewBox="0 0 16 16"><circle cx="6" cy="6" r="4.5" fill="#f4f4f4" stroke="#444" stroke-width="1.5"/><path d="M9.5 9.5 L14.5 14.5" stroke="#e0b020" stroke-width="3"/></svg>
<svg style="left:9px;top:841px" width="16" height="16" viewBox="0 0 16 16"><path d="M5 1 H11 L14 4 V12 H5 Z" fill="#fff" stroke="#222" stroke-width="1"/><path d="M2 4 H8 L11 7 V15 H2 Z" fill="#fff" stroke="#222" stroke-width="1.1"/><path d="M3.5 12 H7" stroke="#888" stroke-width="0.8"/></svg>
<svg style="left:56px;top:182px" width="2438" height="1221" viewBox="56 182 2438 1221"><g transform="matrix(1 0.002887 0 1 0 -0.5717)"><path d="M198 564.90H2273" stroke="#ee0a0e" stroke-width="4.2"/><path d="M198 582.25H2273" stroke="#ee100d" stroke-width="4.2"/><path d="M198 599.60H2273" stroke="#ee170c" stroke-width="4.2"/><path d="M198 616.95H2273" stroke="#ee1d0b" stroke-width="4.2"/><path d="M198 634.30H2273" stroke="#ee230a" stroke-width="4.2"/><path d="M198 651.65H2273" stroke="#ee2a09" stroke-width="4.2"/><path d="M198 669.00H2273" stroke="#ee3008" stroke-width="4.2"/><path d="M198 686.35H2273" stroke="#ef3707" stroke-width="4.2"/><path d="M198 703.70H2273" stroke="#f03e06" stroke-width="4.2"/><path d="M198 721.05H2273" stroke="#f14505" stroke-width="4.2"/><path d="M198 738.40H2273" stroke="#f24b03" stroke-width="4.2"/><path d="M198 755.75H2273" stroke="#f35202" stroke-width="4.2"/><path d="M198 773.10H2273" stroke="#f45901" stroke-width="4.2"/><path d="M198 790.45H2273" stroke="#f56000" stroke-width="4.2"/><path d="M198 807.80H2273" stroke="#f66800" stroke-width="4.2"/><path d="M198 825.15H2273" stroke="#f77100" stroke-width="4.2"/><path d="M198 842.50H2273" stroke="#f87900" stroke-width="4.2"/><path d="M198 859.85H2273" stroke="#f98200" stroke-width="4.2"/><path d="M198 877.20H2273" stroke="#fa8a00" stroke-width="4.2"/><path d="M198 894.55H2273" stroke="#f89107" stroke-width="4.2"/><path d="M198 911.90H2273" stroke="#f5980e" stroke-width="4.2"/><path d="M198 929.25H2273" stroke="#f5a009" stroke-width="4.2"/><path d="M198 946.60H2273" stroke="#f5a805" stroke-width="4.2"/><path d="M198 963.95H2273" stroke="#f5b000" stroke-width="4.2"/><path d="M198 981.30H2273" stroke="#f5bb00" stroke-width="4.2"/><path d="M198 998.65H2273" stroke="#f5c500" stroke-width="4.2"/><path d="M198 1016.00H2273" stroke="#f5d000" stroke-width="4.2"/><path d="M197.8 1015.5L466.9 569.5M277.7 1015.5L526.1 569.5M357.6 1015.5L585.3 569.5M437.5 1015.5L644.5 569.5M517.4 1015.5L703.7 569.5M597.3 1015.5L762.9 569.5M677.2 1015.5L822.1 569.5M757.1 1015.5L881.3 569.5M837.0 1015.5L940.5 569.5M916.9 1015.5L999.7 569.5M996.8 1015.5L1058.9 569.5M1076.7 1015.5L1118.1 569.5M1156.6 1015.5L1177.3 569.5M1236.5 1015.5L1236.5 569.5M1316.4 1015.5L1295.7 569.5M1396.3 1015.5L1354.9 569.5M1476.2 1015.5L1414.1 569.5M1556.1 1015.5L1473.3 569.5M1636.0 1015.5L1532.5 569.5M1715.9 1015.5L1591.7 569.5M1795.8 1015.5L1650.9 569.5M1875.7 1015.5L1710.1 569.5M1955.6 1015.5L1769.3 569.5M2035.5 1015.5L1828.5 569.5M2115.4 1015.5L1887.7 569.5M2195.3 1015.5L1946.9 569.5M2275.2 1015.5L2006.1 569.5" stroke="#d6082a" stroke-width="2.8" fill="none"/></g><rect x="314" y="367" width="1810" height="988" fill="rgba(250,250,252,0.5)"/><clipPath id="pgc"><rect x="315" y="368" width="1808" height="986"/></clipPath><g clip-path="url(#pgc)"><g transform="matrix(1 0.002887 0 1 0 -0.5717)"><path d="M197.8 1015.5L466.9 569.5M277.7 1015.5L526.1 569.5M357.6 1015.5L585.3 569.5M437.5 1015.5L644.5 569.5M517.4 1015.5L703.7 569.5M597.3 1015.5L762.9 569.5M677.2 1015.5L822.1 569.5M757.1 1015.5L881.3 569.5M837.0 1015.5L940.5 569.5M916.9 1015.5L999.7 569.5M996.8 1015.5L1058.9 569.5M1076.7 1015.5L1118.1 569.5M1156.6 1015.5L1177.3 569.5M1236.5 1015.5L1236.5 569.5M1316.4 1015.5L1295.7 569.5M1396.3 1015.5L1354.9 569.5M1476.2 1015.5L1414.1 569.5M1556.1 1015.5L1473.3 569.5M1636.0 1015.5L1532.5 569.5M1715.9 1015.5L1591.7 569.5M1795.8 1015.5L1650.9 569.5M1875.7 1015.5L1710.1 569.5M1955.6 1015.5L1769.3 569.5M2035.5 1015.5L1828.5 569.5M2115.4 1015.5L1887.7 569.5M2195.3 1015.5L1946.9 569.5M2275.2 1015.5L2006.1 569.5" stroke="#ee6c7c" stroke-width="2.5" fill="none"/></g></g><rect x="314.5" y="367.5" width="1809" height="987" fill="none" stroke="#e07880" stroke-width="2"/><rect x="313.5" y="366.5" width="1811" height="989" fill="none" stroke="#3a2a40" stroke-width="1" stroke-dasharray="4 4" opacity="0.85"/><rect x="197.5" y="562.5" width="2079" height="462" fill="none" stroke="#4a5a90" stroke-width="1" stroke-dasharray="4 4"/><g transform="translate(189.5 861.4) rotate(0)"><path d="M-7 0 L-3 -4.5 V-2 H3 V-4.5 L7 0 L3 4.5 V2 H-3 V4.5 Z" fill="#000"/></g><g transform="translate(2284 861.4) rotate(0)"><path d="M-7 0 L-3 -4.5 V-2 H3 V-4.5 L7 0 L3 4.5 V2 H-3 V4.5 Z" fill="#000"/></g><g transform="translate(1236.3 358.5) rotate(90)"><path d="M-7 0 L-3 -4.5 V-2 H3 V-4.5 L7 0 L3 4.5 V2 H-3 V4.5 Z" fill="#000"/></g><g transform="translate(1236.3 1364.4) rotate(90)"><path d="M-7 0 L-3 -4.5 V-2 H3 V-4.5 L7 0 L3 4.5 V2 H-3 V4.5 Z" fill="#000"/></g><g transform="translate(191.3 360.5) rotate(45)"><path d="M-7 0 L-3 -4.5 V-2 H3 V-4.5 L7 0 L3 4.5 V2 H-3 V4.5 Z" fill="#000"/></g><g transform="translate(2282 360.5) rotate(-45)"><path d="M-7 0 L-3 -4.5 V-2 H3 V-4.5 L7 0 L3 4.5 V2 H-3 V4.5 Z" fill="#000"/></g><g transform="translate(191.3 1362) rotate(-45)"><path d="M-7 0 L-3 -4.5 V-2 H3 V-4.5 L7 0 L3 4.5 V2 H-3 V4.5 Z" fill="#000"/></g><g transform="translate(2282 1362) rotate(45)"><path d="M-7 0 L-3 -4.5 V-2 H3 V-4.5 L7 0 L3 4.5 V2 H-3 V4.5 Z" fill="#000"/></g></svg>
<div class="a" style="left:294px;top:67px;width:457px;height:866px;background:#fff;box-sizing:border-box;border:1px solid #c9c9c9;border-top:none;box-shadow:0 2px 4px rgba(0,0,0,0.08);"></div>
<div class="a" style="left:296px;top:265px;width:448px;height:1px;background:#e4e4e4;"></div>
<div class="a" style="left:296px;top:464px;width:448px;height:1px;background:#e4e4e4;"></div>
<div class="a" style="left:296px;top:531px;width:448px;height:1px;background:#e4e4e4;"></div>
<div class="a" style="left:296px;top:664px;width:448px;height:1px;background:#e4e4e4;"></div>
<div class="a" style="left:296px;top:797px;width:448px;height:1px;background:#e4e4e4;"></div>
<div class="a" style="left:296px;top:864px;width:448px;height:1px;background:#e4e4e4;"></div>
<div class="t" style="left:326.60px;top:74.51px;font-size:18px;color:#373b3d;transform:scaleX(0.9387);transform-origin:0 0;">Layers and Objects...</div>
<div class="t" style="right:1753.50px;top:74.51px;font-size:18px;color:#8c8f90;transform:scaleX(0.9909);transform-origin:100% 0;">Shift+Ctrl+L</div>
<div class="t" style="left:326.60px;top:107.51px;font-size:18px;color:#373b3d;transform:scaleX(0.9574);transform-origin:0 0;">Výplň a tah...</div>
<div class="t" style="right:1753.50px;top:107.51px;font-size:18px;color:#8c8f90;transform:scaleX(0.9881);transform-origin:100% 0;">Shift+Ctrl+F</div>
<div class="t" style="left:326.60px;top:140.51px;font-size:18px;color:#373b3d;transform:scaleX(0.9865);transform-origin:0 0;">Vlastnosti objektu...</div>
<div class="t" style="right:1753.50px;top:140.51px;font-size:18px;color:#8c8f90;transform:scaleX(1.0086);transform-origin:100% 0;">Shift+Ctrl+O</div>
<div class="t" style="left:326.60px;top:173.51px;font-size:18px;color:#373b3d;transform:scaleX(0.9746);transform-origin:0 0;">Symboly...</div>
<div class="t" style="right:1753.50px;top:173.51px;font-size:18px;color:#8c8f90;transform:scaleX(0.9923);transform-origin:100% 0;">Shift+Ctrl+Y</div>
<div class="t" style="left:326.60px;top:206.51px;font-size:18px;color:#373b3d;transform:scaleX(0.9315);transform-origin:0 0;">Paint servery...</div>
<div class="t" style="left:326.60px;top:239.51px;font-size:18px;color:#373b3d;transform:scaleX(0.9166);transform-origin:0 0;">Selektory a CSS...</div>
<div class="t" style="right:1753.50px;top:239.51px;font-size:18px;color:#8c8f90;transform:scaleX(1.0086);transform-origin:100% 0;">Shift+Ctrl+Q</div>
<div class="t" style="left:326.60px;top:273.51px;font-size:18px;color:#373b3d;transform:scaleX(0.9486);transform-origin:0 0;">Seskupit</div>
<div class="t" style="right:1753.50px;top:273.51px;font-size:18px;color:#8c8f90;transform:scaleX(0.9616);transform-origin:100% 0;">Ctrl+G</div>
<div class="t" style="left:326.60px;top:306.51px;font-size:18px;color:#373b3d;transform:scaleX(0.9614);transform-origin:0 0;">Zrušit seskupení</div>
<div class="t" style="right:1753.50px;top:306.51px;font-size:18px;color:#8c8f90;transform:scaleX(0.9945);transform-origin:100% 0;">Shift+Ctrl+G</div>
<div class="t" style="left:326.60px;top:339.51px;font-size:18px;color:#373b3d;transform:scaleX(1.0016);transform-origin:0 0;">Vyjmout vybrané objekty ze skupiny</div>
<div class="a" style="left:295px;top:366px;width:455px;height:33px;background:#3584e4;"></div>
<div class="t" style="left:326.60px;top:372.51px;font-size:18px;color:#ffffff;transform:scaleX(0.9125);transform-origin:0 0;">Ořez</div>
<svg style="left:732px;top:376px" width="8" height="11" viewBox="0 0 8 11"><path d="M0.5 0 L7 5.5 L0.5 11 Z" fill="#ffffff"/></svg>
<div class="t" style="left:326.60px;top:405.51px;font-size:18px;color:#373b3d;transform:scaleX(0.9428);transform-origin:0 0;">Maska</div>
<svg style="left:732px;top:409px" width="8" height="11" viewBox="0 0 8 11"><path d="M0.5 0 L7 5.5 L0.5 11 Z" fill="#2e3436"/></svg>
<div class="t" style="left:326.60px;top:438.51px;font-size:18px;color:#373b3d;transform:scaleX(0.9584);transform-origin:0 0;">Vzorek</div>
<svg style="left:732px;top:442px" width="8" height="11" viewBox="0 0 8 11"><path d="M0.5 0 L7 5.5 L0.5 11 Z" fill="#2e3436"/></svg>
<div class="t" style="left:326.60px;top:472.51px;font-size:18px;color:#373b3d;transform:scaleX(0.9723);transform-origin:0 0;">Objekty na značku</div>
<div class="t" style="left:326.60px;top:505.51px;font-size:18px;color:#373b3d;transform:scaleX(0.9993);transform-origin:0 0;">Objekty na vodítka</div>
<div class="t" style="right:1753.50px;top:505.51px;font-size:18px;color:#8c8f90;transform:scaleX(0.9780);transform-origin:100% 0;">Shift+G</div>
<div class="t" style="left:326.60px;top:539.51px;font-size:18px;color:#373b3d;transform:scaleX(0.9594);transform-origin:0 0;">Přesunout navrch</div>
<div class="t" style="right:1753.50px;top:539.51px;font-size:18px;color:#8c8f90;transform:scaleX(0.9806);transform-origin:100% 0;">Home</div>
<div class="t" style="left:326.60px;top:572.51px;font-size:18px;color:#373b3d;transform:scaleX(0.9594);transform-origin:0 0;">Posunout výše</div>
<div class="t" style="right:1753.50px;top:572.51px;font-size:18px;color:#8c8f90;transform:scaleX(0.8844);transform-origin:100% 0;">Page_Up</div>
<div class="t" style="left:326.60px;top:605.51px;font-size:18px;color:#373b3d;transform:scaleX(0.9539);transform-origin:0 0;">Posunout níže</div>
<div class="t" style="right:1753.50px;top:605.51px;font-size:18px;color:#8c8f90;transform:scaleX(0.9236);transform-origin:100% 0;">Page_Down</div>
<div class="t" style="left:326.60px;top:638.51px;font-size:18px;color:#373b3d;transform:scaleX(0.9989);transform-origin:0 0;">Přesunout dospod</div>
<div class="t" style="right:1753.50px;top:638.51px;font-size:18px;color:#8c8f90;transform:scaleX(0.8929);transform-origin:100% 0;">End</div>
<div class="t" style="left:326.60px;top:672.51px;font-size:18px;color:#373b3d;transform:scaleX(1.0126);transform-origin:0 0;">Otočit o 90 ° vpravo</div>
<div class="t" style="right:1753.50px;top:672.51px;font-size:18px;color:#8c8f90;transform:scaleX(0.9836);transform-origin:100% 0;">Ctrl+]</div>
<div class="t" style="left:326.60px;top:705.51px;font-size:18px;color:#373b3d;transform:scaleX(1.0082);transform-origin:0 0;">Otočit o 90 ° vlevo</div>
<div class="t" style="right:1753.50px;top:705.51px;font-size:18px;color:#8c8f90;transform:scaleX(0.9836);transform-origin:100% 0;">Ctrl+[</div>
<div class="t" style="left:326.60px;top:738.51px;font-size:18px;color:#373b3d;transform:scaleX(0.9947);transform-origin:0 0;">Převrátit vodorovně</div>
<div class="t" style="right:1753.50px;top:738.51px;font-size:18px;color:#8c8f90;transform:scaleX(0.8846);transform-origin:100% 0;">H</div>
<div class="t" style="left:326.60px;top:771.51px;font-size:18px;color:#373b3d;transform:scaleX(0.9500);transform-origin:0 0;">Převrátit svisle</div>
<div class="t" style="right:1753.50px;top:771.51px;font-size:18px;color:#8c8f90;transform:scaleX(0.9583);transform-origin:100% 0;">V</div>
<div class="t" style="left:326.60px;top:805.51px;font-size:18px;color:#373b3d;transform:scaleX(0.9667);transform-origin:0 0;">Zobrazit vše</div>
<div class="t" style="left:326.60px;top:838.51px;font-size:18px;color:#373b3d;transform:scaleX(0.9945);transform-origin:0 0;">Odemknout vše</div>
<div class="t" style="left:326.60px;top:872.51px;font-size:18px;color:#373b3d;transform:scaleX(0.9306);transform-origin:0 0;">Transformace...</div>
<div class="t" style="right:1753.50px;top:872.51px;font-size:18px;color:#8c8f90;transform:scaleX(1.0245);transform-origin:100% 0;">Shift+Ctrl+M</div>
<div class="t" style="left:326.60px;top:905.51px;font-size:18px;color:#373b3d;transform:scaleX(0.9707);transform-origin:0 0;">Zarovnat a rozmístit...</div>
<div class="t" style="right:1753.50px;top:905.51px;font-size:18px;color:#8c8f90;transform:scaleX(0.9789);transform-origin:100% 0;">Shift+Ctrl+A</div>
<svg style="left:303px;top:541px" width="16" height="16" viewBox="0 0 16 16"><rect x="0" y="0.5" width="15" height="1.8" fill="#1c1c1c"/><rect x="0" y="3.5" width="8" height="2" fill="#1c1c1c"/><rect x="0" y="7" width="8" height="2" fill="#1c1c1c"/><rect x="0" y="10.5" width="8" height="2" fill="#1c1c1c"/><rect x="0" y="13.5" width="8" height="2" fill="#1c1c1c"/><path d="M12.5 15 V5" stroke="#1c1c1c" stroke-width="1.3"/><path d="M10.3 6.5 L12.5 3 L14.7 6.5 Z" fill="#1c1c1c"/></svg>
<svg style="left:303px;top:574px" width="16" height="16" viewBox="0 0 16 16"><rect x="0" y="0" width="6" height="2" fill="#1c1c1c"/><rect x="0" y="3.3" width="15" height="1.8" fill="none" stroke="#1c1c1c" stroke-width="1"/><rect x="0" y="7" width="9" height="2" fill="#1c1c1c"/><rect x="0" y="10.3" width="9" height="2" fill="#1c1c1c"/><rect x="0" y="13.5" width="9" height="2" fill="#1c1c1c"/><path d="M10 9 L14.5 7 L12.5 11.5 Z" fill="#1c1c1c"/></svg>
<svg style="left:303px;top:607px" width="16" height="16" viewBox="0 0 16 16"><rect x="9" y="0" width="6" height="2" fill="#1c1c1c"/><rect x="7" y="3.3" width="8" height="2" fill="#1c1c1c"/><rect x="0" y="6.8" width="15" height="2" fill="none" stroke="#1c1c1c" stroke-width="1"/><rect x="0" y="10.3" width="15" height="1.8" fill="#1c1c1c"/><rect x="7" y="13.5" width="8" height="2" fill="#1c1c1c"/><path d="M1 4.5 L5 2.5 L4 6.5 Z" fill="#1c1c1c"/></svg>
<svg style="left:303px;top:640px" width="16" height="16" viewBox="0 0 16 16"><path d="M2.5 0 V9" stroke="#1c1c1c" stroke-width="1.3"/><path d="M0.3 7.5 L2.5 11 L4.7 7.5 Z" fill="#1c1c1c"/><rect x="7" y="0" width="8" height="2" fill="#1c1c1c"/><rect x="7" y="3.3" width="8" height="2" fill="#1c1c1c"/><rect x="7" y="6.8" width="8" height="2" fill="#1c1c1c"/><rect x="0" y="10.3" width="15" height="1.8" fill="#1c1c1c"/><rect x="0" y="13.3" width="15" height="2" fill="none" stroke="#1c1c1c" stroke-width="1"/></svg>
<svg style="left:303px;top:675px" width="16" height="16" viewBox="0 0 16 16"><path d="M2.6 12.2 A5.8 5.8 0 1 1 12.8 8.4" fill="none" stroke="#1c1c1c" stroke-width="2"/><path d="M9.4 7.8 L16.4 7.8 L12.9 12.4 Z" fill="#1c1c1c"/></svg>
<svg style="left:303px;top:708px" width="16" height="16" viewBox="0 0 16 16"><path d="M13.2 12.4 A5.8 5.8 0 1 0 3 8.4" fill="none" stroke="#1c1c1c" stroke-width="2"/><path d="M-0.4 7.8 L6.6 7.8 L3.1 12.4 Z" fill="#1c1c1c"/></svg>
<svg style="left:303px;top:741px" width="16" height="16" viewBox="0 0 16 16"><path d="M2 8 H14" stroke="#1c1c1c" stroke-width="2"/><path d="M5.5 3.5 L1.3 8 L5.5 12.5 M10.5 3.5 L14.7 8 L10.5 12.5" fill="none" stroke="#1c1c1c" stroke-width="2"/></svg>
<svg style="left:303px;top:773px" width="16" height="16" viewBox="0 0 16 16"><path d="M8 2 V14" stroke="#1c1c1c" stroke-width="2"/><path d="M3.5 5.5 L8 1.3 L12.5 5.5 M3.5 10.5 L8 14.7 L12.5 10.5" fill="none" stroke="#1c1c1c" stroke-width="2"/></svg>
<div class="a" style="left:747px;top:366px;width:227px;height:100px;background:#fff;box-sizing:border-box;border:1px solid #c9c9c9;border-top:none;"></div>
<div class="a" style="left:748px;top:366px;width:225px;height:33px;background:#3584e4;"></div>
<div class="t" style="left:779.40px;top:373.11px;font-size:18px;color:#ffffff;transform:scaleX(0.9519);transform-origin:0 0;">Set Clip</div>
<div class="t" style="left:779.40px;top:406.01px;font-size:18px;color:#373b3d;transform:scaleX(0.9074);transform-origin:0 0;">Set Inverse Clip (LPE)</div>
<div class="t" style="left:779.40px;top:439.01px;font-size:18px;color:#373b3d;transform:scaleX(0.8817);transform-origin:0 0;">Release Clip</div>
<div class="a" style="left:695px;top:425px;width:537px;height:50px;background:rgba(40,40,40,0.96);border-radius:6px;"></div>
<div class="t" style="left:708.90px;top:441.51px;font-size:18px;color:#f4f4f4;transform:scaleX(0.9756);transform-origin:0 0;">Použít ořez na výběr (nejhořejší objekt použit jako ořezová cesta)</div>
</body></html>
